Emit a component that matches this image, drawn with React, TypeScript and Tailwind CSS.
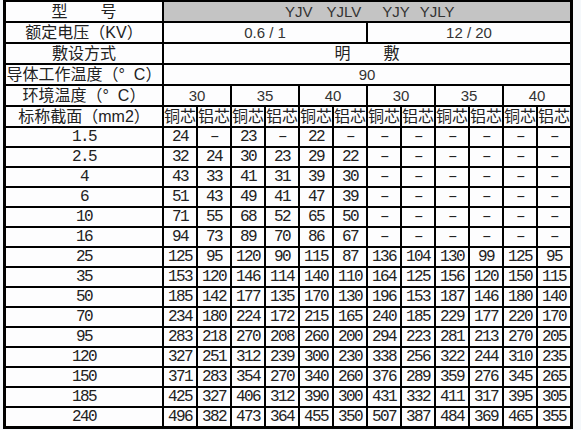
import React from "react";

const sizes = ["1.5", "2.5", "4", "6", "10", "16", "25", "35", "50", "70", "95", "120", "150", "185", "240"];
const D = "–";
const data: string[][] = [
  ["24", D, "23", D, "22", D, D, D, D, D, D, D],
  ["32", "24", "30", "23", "29", "22", D, D, D, D, D, D],
  ["43", "33", "41", "31", "39", "30", D, D, D, D, D, D],
  ["51", "43", "49", "41", "47", "39", D, D, D, D, D, D],
  ["71", "55", "68", "52", "65", "50", D, D, D, D, D, D],
  ["94", "73", "89", "70", "86", "67", D, D, D, D, D, D],
  ["125", "95", "120", "90", "115", "87", "136", "104", "130", "99", "125", "95"],
  ["153", "120", "146", "114", "140", "110", "164", "125", "156", "120", "150", "115"],
  ["185", "142", "177", "135", "170", "130", "196", "153", "187", "146", "180", "140"],
  ["234", "180", "224", "172", "215", "165", "240", "185", "229", "177", "220", "170"],
  ["283", "218", "270", "208", "260", "200", "294", "223", "281", "213", "270", "205"],
  ["327", "251", "312", "239", "300", "230", "338", "256", "322", "244", "310", "235"],
  ["371", "283", "354", "270", "340", "260", "376", "289", "359", "276", "345", "265"],
  ["425", "327", "406", "312", "390", "300", "431", "332", "411", "317", "395", "305"],
  ["496", "382", "473", "364", "455", "350", "507", "387", "484", "369", "465", "355"],
];

const cjk = "font-['Liberation_Sans','Noto_Sans_CJK_SC',sans-serif]";
const mono = "font-['Liberation_Mono',monospace]";

function HCell({ children, className = "" }: { children: React.ReactNode; className?: string }) {
  return (
    <div
      className={`bg-[#fdfdfe] flex items-center justify-center whitespace-nowrap overflow-visible text-[16px] leading-none text-[#222] ${cjk} ${className}`}
    >
      {children}
    </div>
  );
}

function NCell({ children, className = "" }: { children: React.ReactNode; className?: string }) {
  return (
    <div
      className={`bg-[#fdfdfe] flex items-center justify-center whitespace-nowrap text-[15px] leading-none text-[#333] font-['Liberation_Sans',sans-serif] ${className}`}
    >
      {children}
    </div>
  );
}

export default function App() {
  return (
    <div className="w-[581px] h-[430px] bg-[#f5f8fb] overflow-hidden">
      <div className="ml-[3px] w-[570px] bg-black pt-[2px] pl-[3px] pr-[3px] pb-[3px] grid grid-cols-[156px_repeat(12,32px)] grid-rows-[repeat(6,19px)_repeat(15,18px)] gap-[2px]">
        {/* Row 1 */}
        <HCell>
          <span>型</span>
          <span className="ml-[33px]">号</span>
        </HCell>
        <div className="col-span-12 bg-[#c4c4c4] flex items-center pl-[121px] text-[15px] leading-none text-[#333] font-['Liberation_Sans',sans-serif] whitespace-nowrap">
          <span>YJV</span>
          <span className="ml-[14px]">YJLV</span>
          <span className="ml-[21px]">YJY</span>
          <span className="ml-[10px]">YJLY</span>
        </div>

        {/* Row 2 */}
        <HCell>额定电压（KV）</HCell>
        <NCell className="col-span-6">0.6 / 1</NCell>
        <NCell className="col-span-6">12 / 20</NCell>

        {/* Row 3 */}
        <HCell>敷设方式</HCell>
        <HCell className="col-span-12">
          <span>明</span>
          <span className="ml-[33px]">敷</span>
        </HCell>

        {/* Row 4 */}
        <HCell>导体工作温度（°&nbsp;&nbsp;C）</HCell>
        <NCell className="col-span-12">90</NCell>

        {/* Row 5 */}
        <HCell>环境温度（°&nbsp;&nbsp;C）</HCell>
        {["30", "35", "40", "30", "35", "40"].map((t, i) => (
          <NCell key={i} className="col-span-2">
            {t}
          </NCell>
        ))}

        {/* Row 6 */}
        <HCell>标称截面（mm2）</HCell>
        {Array.from({ length: 12 }).map((_, i) => (
          <HCell key={i}>{i % 2 === 0 ? "铜芯" : "铝芯"}</HCell>
        ))}

        {/* Data rows */}
        {sizes.map((s, r) => (
          <React.Fragment key={s}>
            <div className={`bg-[#fdfdfe] flex items-center justify-center text-[16px] leading-none text-[#222] tracking-[-1.6px] ${mono}`}>
              {s}
            </div>
            {data[r].map((v, c) => (
              <div
                key={c}
                className={`bg-[#fdfdfe] flex items-center justify-center text-[16px] leading-none text-[#222] tracking-[-1.6px] ${mono}`}
              >
                {v}
              </div>
            ))}
          </React.Fragment>
        ))}
      </div>
    </div>
  );
}
